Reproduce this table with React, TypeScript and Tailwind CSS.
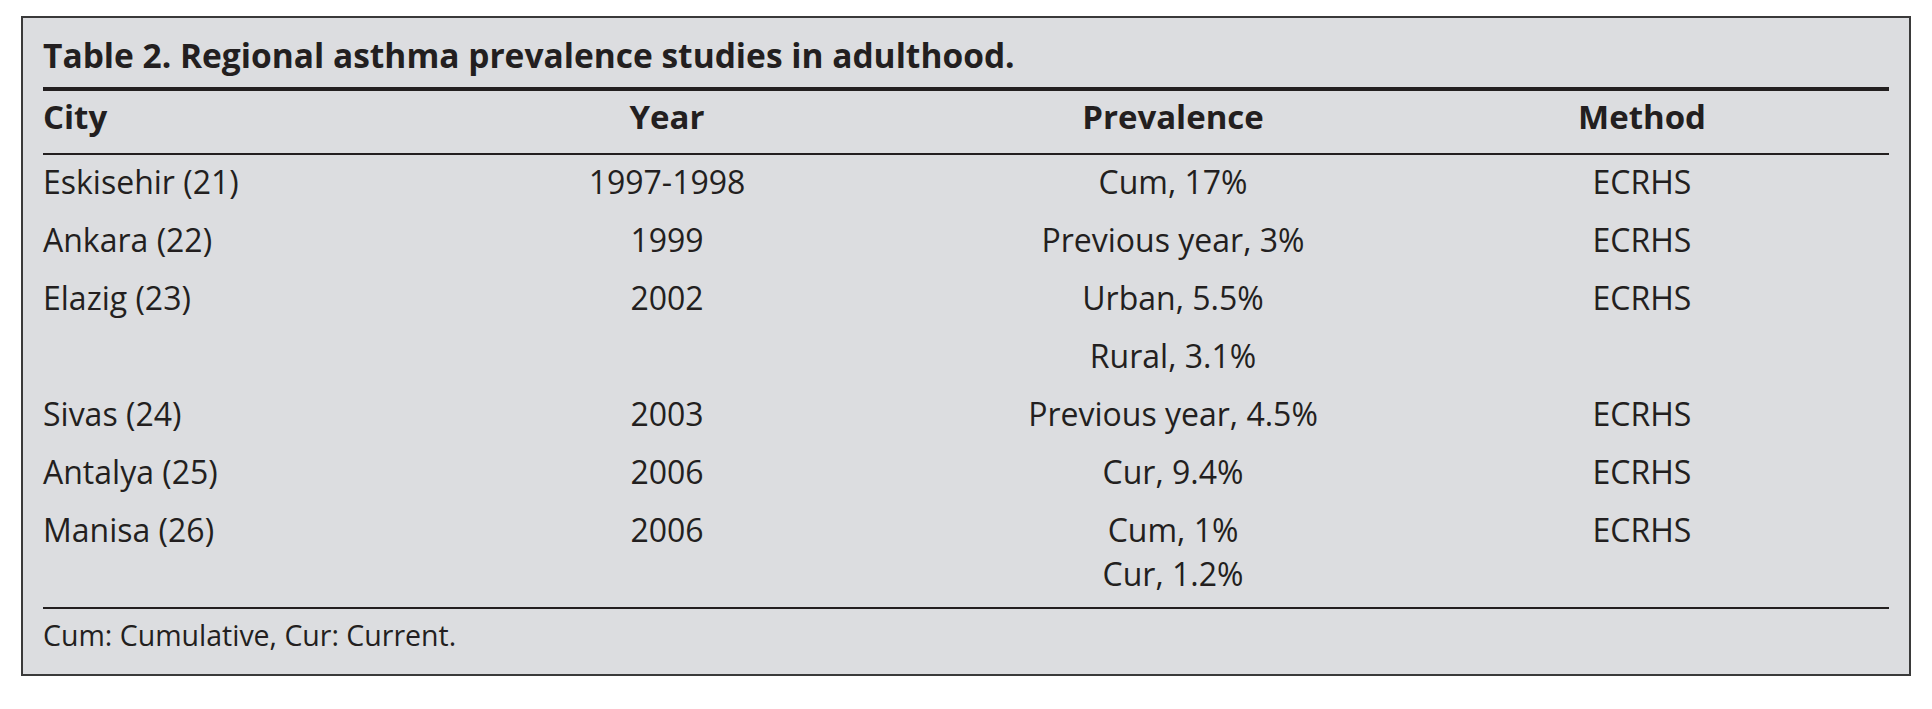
const rows = [
  { city: "Eskisehir (21)", year: "1997-1998", prev: ["Cum, 17%"], method: "ECRHS" },
  { city: "Ankara (22)", year: "1999", prev: ["Previous year, 3%"], method: "ECRHS" },
  { city: "Elazig (23)", year: "2002", prev: ["Urban, 5.5%"], method: "ECRHS" },
  { city: "", year: "", prev: ["Rural, 3.1%"], method: "" },
  { city: "Sivas (24)", year: "2003", prev: ["Previous year, 4.5%"], method: "ECRHS" },
  { city: "Antalya (25)", year: "2006", prev: ["Cur, 9.4%"], method: "ECRHS" },
  { city: "Manisa (26)", year: "2006", prev: ["Cum, 1%", "Cur, 1.2%"], method: "ECRHS" },
]

export default function App() {
  return (
    <div className="min-h-[709px] w-[1932px] bg-white pt-[16px] pl-[21px] font-['Open_Sans',sans-serif] text-[32px] leading-[44px] text-[#231f20]">
      <div className="w-[1890px] border-2 border-[#3a3a3a] bg-[#dcdde0] px-[20px] pt-[15px] pb-[17px]">
        {/* Title */}
        <h1 className="mb-[10px] text-[33.5px] font-bold">Table 2. Regional asthma prevalence studies in adulthood.</h1>

        {/* Header */}
        <div className="grid grid-cols-[342px_564px_448px_490px] border-t-4 border-b-2 border-[#231f20] pt-1 pb-[14px] text-[33px] font-bold">
          <div>City</div>
          <div className="text-center">Year</div>
          <div className="text-center">Prevalence</div>
          <div className="text-center">Method</div>
        </div>

        {/* Body */}
        <div className="border-b-2 border-[#231f20]">
          {rows.map((row, i) => (
            <div
              key={i}
              className={`grid grid-cols-[342px_564px_448px_490px] pt-[5px] ${i === rows.length - 1 ? "pb-[11px]" : "pb-[9px]"}`}
            >
              <div>{row.city}</div>
              <div className="text-center">{row.year}</div>
              <div className="text-center">
                {row.prev.map((p) => (
                  <div key={p}>{p}</div>
                ))}
              </div>
              <div className="text-center">{row.method}</div>
            </div>
          ))}
        </div>

        {/* Footnote */}
        <p className="pt-1 text-[28.5px]">Cum: Cumulative, Cur: Current.</p>
      </div>
    </div>
  )
}
